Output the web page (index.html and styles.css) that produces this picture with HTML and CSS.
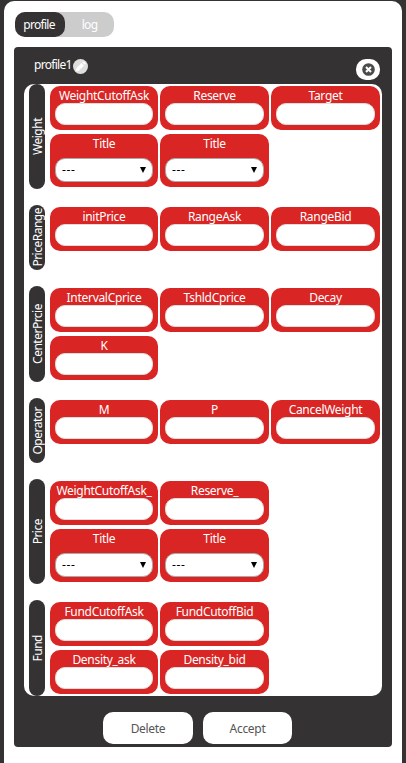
FILE: index.html
```html
<!DOCTYPE html>
<html lang="en">
<head>
<meta charset="utf-8">
<title>profile</title>
<link rel="stylesheet" href="styles.css">
</head>
<body>
<main class="page">
  <nav class="tabs"><span class="tab active">profile</span><span class="tab">log</span></nav>
  <section class="panel">
    <header class="head">
      <span class="name">profile1</span>
      <svg class="edit" viewBox="0 0 15 15"><circle cx="7.5" cy="7.5" r="7.5" fill="#dedede"/><path d="M2.6 12.4l.7-3.2 5.2-5.2 2.5 2.5-5.2 5.2zM9.2 3.3l.9-.9q.5-.4 1 0l1.5 1.5q.4.5 0 1l-.9.9z" fill="#fff"/></svg>
      <button class="close"><svg viewBox="0 0 13 13"><circle cx="6.5" cy="6.5" r="6.3" fill="#4b4b4b"/><path d="M4 4l5 5M9 4l-5 5" stroke="#fff" stroke-width="2.1"/></svg></button>
    </header>
    <div class="groups">
      <div class="group">
        <div class="side"><span>Weight</span></div>
        <div class="fields">
          <label class="card"><span>WeightCutoffAsk</span><input></label>
          <label class="card"><span>Reserve</span><input></label>
          <label class="card"><span>Target</span><input></label>
          <div class="card tall"><span>Title</span><div class="select">---<i></i></div></div>
          <div class="card tall"><span>Title</span><div class="select">---<i></i></div></div>
        </div>
      </div>
      <div class="group">
        <div class="side"><span>PriceRange</span></div>
        <div class="fields">
          <label class="card"><span>initPrice</span><input></label>
          <label class="card"><span>RangeAsk</span><input></label>
          <label class="card"><span>RangeBid</span><input></label>
        </div>
      </div>
      <div class="group">
        <div class="side"><span>CenterPrcie</span></div>
        <div class="fields">
          <label class="card"><span>IntervalCprice</span><input></label>
          <label class="card"><span>TshldCprice</span><input></label>
          <label class="card"><span>Decay</span><input></label>
          <label class="card"><span>K</span><input></label>
        </div>
      </div>
      <div class="group">
        <div class="side"><span>Operator</span></div>
        <div class="fields">
          <label class="card"><span>M</span><input></label>
          <label class="card"><span>P</span><input></label>
          <label class="card"><span>CancelWeight</span><input></label>
        </div>
      </div>
      <div class="group">
        <div class="side"><span>Price</span></div>
        <div class="fields">
          <label class="card"><span>WeightCutoffAsk_</span><input></label>
          <label class="card"><span>Reserve_</span><input></label>
          <div class="card tall first"><span>Title</span><div class="select">---<i></i></div></div>
          <div class="card tall"><span>Title</span><div class="select">---<i></i></div></div>
        </div>
      </div>
      <div class="group">
        <div class="side"><span>Fund</span></div>
        <div class="fields">
          <label class="card"><span>FundCutoffAsk</span><input></label>
          <label class="card"><span>FundCutoffBid</span><input></label>
          <label class="card first"><span>Density_ask</span><input></label>
          <label class="card"><span>Density_bid</span><input></label>
        </div>
      </div>
    </div>
    <footer class="actions"><button>Delete</button><button>Accept</button></footer>
  </section>
</main>
</body>
</html>
```
FILE: styles.css
```css
* { box-sizing: border-box; }
body {
  margin: 0;
  height: 763px;
  overflow: hidden;
  padding: 1px 4px 0 4px;
  background: #353233;
  font: 12px/16px "Noto Sans", "Open Sans", sans-serif;
  letter-spacing: -0.3px;
  color: #fff;
}
.page {
  height: 762px;
  padding: 11px 10px 0;
  background: #fff;
  border-radius: 10px 10px 0 0;
}
.tabs {
  display: flex;
  width: 99px;
  height: 25px;
  margin-left: 1px;
  border-radius: 10px;
  background: #ccc;
  line-height: 26px;
  text-align: center;
  letter-spacing: -0.7px;
}
.tab { width: 49px; }
.tab.active { width: 50px; padding-right: 2px; background: #353233; border-radius: 10px; }
.panel {
  margin-top: 10px;
  height: 700px;
  width: 378px;
  padding: 0 10px;
  background: #353233;
  border-radius: 4px;
}
.head { display: flex; height: 37px; padding: 10px 2px 0 10px; }
.name { width: 39px; white-space: nowrap; letter-spacing: -0.7px; }
.edit { width: 15px; height: 15px; margin-top: 2px; }
.close {
  display: flex;
  align-items: center;
  justify-content: center;
  width: 24px;
  height: 21px;
  margin: 2px 0 0 auto;
  padding: 0;
  border: 0;
  border-radius: 10px;
  background: #fff;
}
.close svg { width: 13px; height: 13px; }
.groups {
  display: flex;
  flex-direction: column;
  gap: 16px;
  height: 612px;
  padding: 0 2px 0 5px;
  background: #fff;
  border-radius: 10px;
}
.group { display: flex; gap: 5px; min-height: 65px; }
.side {
  display: flex;
  align-items: center;
  justify-content: center;
  width: 16px;
  padding-left: 2px;
  border-radius: 8px;
  background: #353233;
}
.side span {
  writing-mode: vertical-rl;
  transform: rotate(180deg);
  white-space: nowrap;
  letter-spacing: -0.5px;
}
.fields {
  flex: 1;
  display: grid;
  grid-template-columns: 108px 109px 109px;
  align-content: start;
  gap: 4px 2px;
  padding: 2px 0;
}
.card {
  display: flex;
  flex-direction: column;
  justify-content: space-between;
  height: 44px;
  padding: 1px 5px 5px;
  border-radius: 10px;
  background: #d92524;
  text-align: center;
}
.card.tall { height: 53px; }
.card.first { grid-column: 1; }
.card > span { height: 16px; line-height: 17px; white-space: nowrap; }
.card input {
  width: 100%;
  height: 22px;
  padding: 0 8px;
  border: 1px solid #ddd;
  border-radius: 10px;
  background: #fff;
  outline: 0;
}
.select {
  display: flex;
  align-items: center;
  justify-content: space-between;
  height: 24px;
  padding: 0 6px;
  border: 1px solid #a9a9a9;
  border-radius: 10px;
  background: #fff;
  color: #000;
  letter-spacing: 0.6px;
}
.select i {
  border: solid transparent;
  border-width: 6px 3.5px 0;
  border-top-color: #000;
}
.actions { display: flex; gap: 10px; padding: 16px 0 0 79px; }
.actions button {
  width: 90px;
  height: 32px;
  padding: 2px 0 0;
  border: 0;
  border-radius: 10px;
  background: #fff;
  color: #555;
  font: inherit;
  letter-spacing: -0.3px;
}
.actions button + button { width: 89px; }
```
